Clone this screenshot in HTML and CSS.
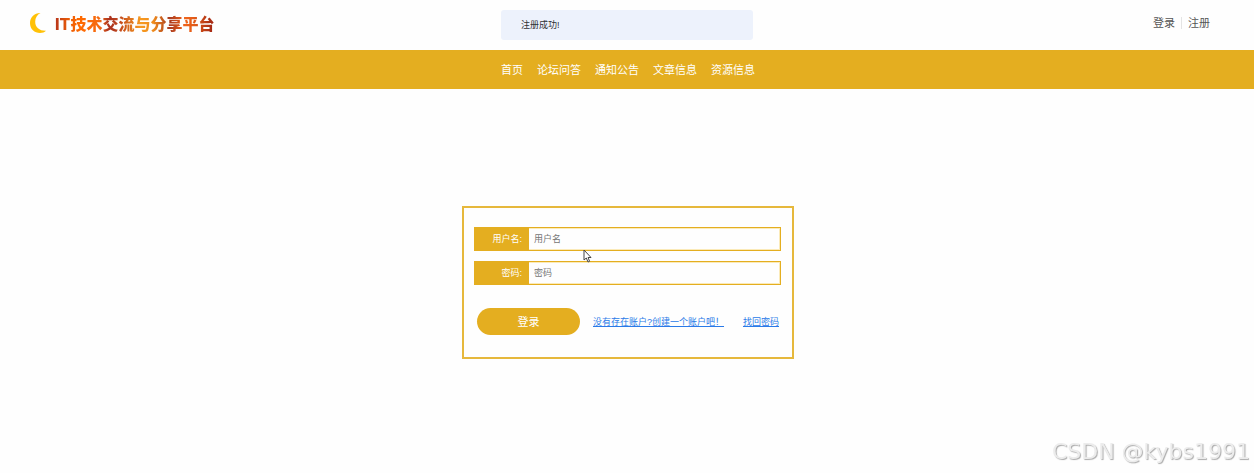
FILE: index.html
```html
<!DOCTYPE html>
<html lang="zh-CN">
<head>
  <meta charset="UTF-8">
  <meta name="viewport" content="width=device-width, initial-scale=1.0">
  <title>IT技术交流与分享平台</title>
  <link rel="stylesheet" href="styles.css">
</head>
<body>
  <header class="top">
    <a class="brand" href="#">
      <svg class="moon" viewBox="0 0 18 22" aria-hidden="true">
        <path d="M11.500 1C5 1 1 5.500 1 11.200C1 17 5.500 21 11 21C13.500 21 15.500 20.200 17 18.800C10.500 19 6.200 15.500 6.200 9.800C6.200 6 8 2.800 11.500 1Z"/>
      </svg>
      <span class="title">IT技术交流与分享平台</span>
    </a>
    <div class="account">
      <a href="#login">登录</a>
      <a href="#register">注册</a>
    </div>
  </header>

  <nav class="menu">
    <a href="#">首页</a>
    <a href="#">论坛问答</a>
    <a href="#">通知公告</a>
    <a href="#">文章信息</a>
    <a href="#">资源信息</a>
  </nav>

  <main>
    <form class="login" id="login">
      <div class="field">
        <label for="username">用户名:</label>
        <input type="text" id="username" name="username" placeholder="用户名">
      </div>
      <div class="field">
        <label for="password">密码:</label>
        <input type="password" id="password" name="password" placeholder="密码">
      </div>
      <div class="actions">
        <button type="submit">登录</button>
        <a href="#register">没有存在账户?创建一个账户吧！</a>
        <a class="forgot" href="#forgot">找回密码</a>
      </div>
    </form>
  </main>

  <div class="message" role="alert">注册成功!</div>
  <svg class="cursor" viewBox="0 0 9 14" aria-hidden="true">
    <path d="M1 1V11L3.300 9L5 13L6.600 12.300L5 8.500H8Z"/>
  </svg>
  <div class="watermark">CSDN @kybs1991</div>
</body>
</html>
```

FILE: styles.css
```css
* {
  box-sizing: border-box;
}

body {
  display: flex;
  flex-direction: column;
  min-height: 100vh;
  margin: 0;
  background: #fefefe;
  font-family: "Liberation Sans", "Noto Sans CJK SC", sans-serif;
  font-size: 9px;
  color: #303133;
}

a {
  text-decoration: none;
}

.top {
  display: flex;
  align-items: center;
  justify-content: space-between;
  height: 50px;
  padding: 0 44px 4px 29px;
}

.brand {
  display: flex;
  align-items: center;
  gap: 8px;
}

.moon {
  width: 18px;
  height: 22px;
  fill: #ffc107;
}

.title {
  font-family: Inter, "Noto Sans CJK SC", sans-serif;
  font-size: 16px;
  font-weight: 800;
  background: linear-gradient(90deg, #b5341b 0%, #e85a08 8%, #ff6a00 16%, #f56a10 28%, #a83020 34%, #c8501c 42%, #f79a20 54%, #ee8a1c 62%, #a83a20 72%, #f0641a 82%, #e05a18 88%, #a82c14 98%);
  background-clip: text;
  -webkit-background-clip: text;
  color: transparent;
}

.account {
  display: flex;
  font-size: 11px;
}

.account a {
  color: #555;
  line-height: 12px;
}

.account a + a {
  margin-left: 6px;
  padding-left: 6px;
  border-left: 1px solid #e4e4e4;
}

.menu {
  display: flex;
  align-items: center;
  justify-content: center;
  gap: 14px;
  height: 39px;
  padding: 0 0 2px 2px;
  background: #e4ae20;
  font-size: 11px;
}

.menu a {
  color: #fff;
}

main {
  flex: 1;
  display: flex;
  align-items: center;
  justify-content: center;
  padding: 2px 0 0 2px;
}

.login {
  width: 332px;
  padding: 19px 11px 22px 10px;
  border: 2px solid #e6b83c;
}

.field {
  display: flex;
  height: 24px;
  margin-bottom: 10px;
  border: 1px solid #e4ae20;
  box-shadow: inset 0 0 0 1px #fbeab8;
}

.field label {
  width: 54px;
  padding-right: 7px;
  background: #e4ae20;
  color: #fff;
  line-height: 22px;
  text-align: right;
}

.field input {
  flex: 1;
  min-width: 0;
  padding: 0 5px;
  border: 0;
  background: none;
  font: inherit;
}

.field input::placeholder {
  color: #757575;
}

.actions {
  display: flex;
  align-items: center;
  gap: 13px;
  margin-top: 23px;
  padding: 0 2px 0 3px;
}

.actions button {
  width: 103px;
  height: 27px;
  border: 0;
  border-radius: 14px;
  background: #e4ae20;
  color: #fff;
  font: inherit;
  font-size: 11px;
}

.actions a {
  color: #2a7ae8;
  text-decoration: underline;
  white-space: nowrap;
}

.actions .forgot {
  margin-left: auto;
}

/* things floating over the page */
.message {
  position: fixed;
  top: 10px;
  left: 50%;
  width: 252px;
  padding: 0 20px;
  border-radius: 3px;
  background: #edf2fc;
  line-height: 30px;
  transform: translateX(-50%);
}

.cursor {
  position: fixed;
  top: 249px;
  left: 583px;
  width: 9px;
  height: 14px;
  fill: #fff;
  stroke: #444;
}

.watermark {
  position: fixed;
  right: 4px;
  bottom: 9px;
  color: #ececec;
  font-family: "DejaVu Sans", sans-serif;
  font-size: 22px;
  text-shadow: 1px 1px 1px #aaa;
}
```
